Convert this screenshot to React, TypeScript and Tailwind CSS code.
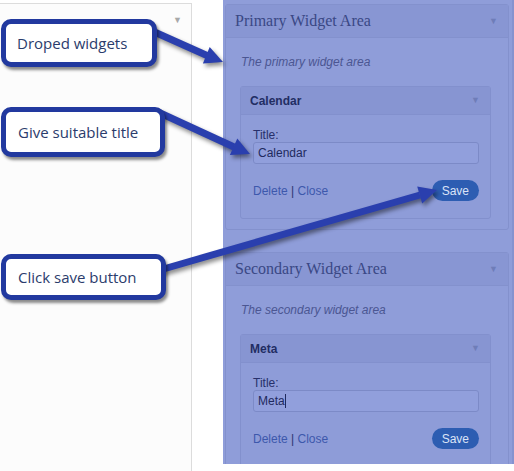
import React from 'react'

const Caret = () => <span className="text-[9px] leading-none text-[#6f7db8]">▼</span>

const Widget = ({ name, value, cursor }: { name: string; value: string; cursor?: boolean }) => (
  <div className="ml-[14px] w-[251px] border border-[#8290cd] rounded-[3px] bg-[#8e9cd8]">
    <div className="h-[28px] flex items-center justify-between pl-[9px] pr-[10px] bg-[#8795d2] border-b border-[#8290cd]">
      <span className="font-bold text-[12px] text-[#222d63]">{name}</span>
      <Caret />
    </div>
    <div className="pl-[12px] pr-[11px] pt-[13px] pb-[17px]">
      <div className="text-[12px] leading-[14px] text-[#27306a]">Title:</div>
      <div className="h-[22px] flex items-center border border-[#7c8ac7] rounded-[3px] bg-[#919fdc] px-[4px] text-[12px] text-[#1f2a5e]">
        {value}
        {cursor && <span className="inline-block w-px h-[14px] bg-[#1f2a5e]" />}
      </div>
      <div className="mt-[16px] flex items-center justify-between">
        <span className="text-[12px] text-[#3d58ac]">
          Delete <span className="text-[#2c3570]">|</span> Close
        </span>
        <span className="h-[21px] px-[10px] rounded-full bg-[#2d5db2] text-[12px] text-[#dbe3f7] flex items-center">
          Save
        </span>
      </div>
    </div>
  </div>
)

const Area = ({ title, desc, children }: { title: string; desc: string; children: React.ReactNode }) => (
  <div className="w-[284px] border border-[#8391cd] rounded-[3px] bg-[#8f9dd9]">
    <div className="h-[33px] flex items-center justify-between pl-[9px] pr-[10px] bg-[#8896d3] border-b border-[#8391cd]">
      <span className="font-['Liberation_Serif',Georgia,serif] text-[16px] text-[#3a4885]">{title}</span>
      <Caret />
    </div>
    <div className="pt-[17px] pb-[10px]">
      <p className="pl-[15px] italic text-[12px] leading-[14px] text-[#4b5692]">{desc}</p>
      <div className="mt-[17px]">{children}</div>
    </div>
  </div>
)

const Arrow = ({ x1, y1, bx, by, pts }: { x1: number; y1: number; bx: number; by: number; pts: string }) => (
  <g>
    <line x1={x1} y1={y1} x2={bx} y2={by} stroke="#2a3fae" strokeWidth="7" />
    <polygon points={pts} fill="#2a3fae" />
  </g>
)

export default function App() {
  return (
    <div className="relative w-[514px] h-[471px] bg-white overflow-hidden font-['Liberation_Sans',Arial,sans-serif]">
      <div className="flex">
        {/* left sidebar */}
        <div className="mt-[3px] w-[192px] h-[468px] border-t border-r border-[#dcdcdc] bg-[#fcfcfc] flex justify-end pt-[12px] pr-[9px]">
          <span className="text-[9px] leading-none text-[#a8a8a8]">▼</span>
        </div>

        {/* widget areas */}
        <div className="ml-[31px] w-[291px] h-[464px] overflow-hidden bg-[#8f9dd9] pt-[4px] pl-[2px] border-r-2 border-[#8593cf]">
          <Area title="Primary Widget Area" desc="The primary widget area">
            <Widget name="Calendar" value="Calendar" />
          </Area>
          <div className="mt-[22px]">
            <Area title="Secondary Widget Area" desc="The secondary widget area">
              <Widget name="Meta" value="Meta" cursor />
            </Area>
          </div>
        </div>
      </div>

      {/* arrows */}
      <svg className="absolute inset-0 drop-shadow-[2px_3px_2px_rgba(0,0,0,0.45)]" width="514" height="471">
        <Arrow x1={150} y1={30} bx={207} by={55.5} pts="223,62 202.9,63.5 209.7,46.9" />
        <Arrow x1={158} y1={112} bx={234} by={147} pts="250,154 229.9,154.9 237.3,138.5" />
        <Arrow x1={160} y1={270} bx={420} by={195} pts="437,190 422.2,203.6 417.2,186.4" />
      </svg>

      {/* callouts */}
      <div className="absolute left-[1px] top-[19px] w-[156px] h-[48px] rounded-[10px] border-[5px] border-[#22399f] bg-white shadow-[2px_3px_3px_rgba(0,0,0,0.45)] flex items-center pl-[11px] font-['Open_Sans',sans-serif] text-[15px] text-[#2b3c6c]">
        Droped widgets
      </div>
      <div className="absolute left-[1px] top-[107px] w-[164px] h-[50px] rounded-[10px] border-[5px] border-[#22399f] bg-white shadow-[2px_3px_3px_rgba(0,0,0,0.45)] flex items-center pl-[12px] font-['Open_Sans',sans-serif] text-[15px] text-[#2b3c6c]">
        Give suitable title
      </div>
      <div className="absolute left-[1px] top-[254px] w-[165px] h-[46px] rounded-[10px] border-[5px] border-[#22399f] bg-white shadow-[2px_3px_3px_rgba(0,0,0,0.45)] flex items-center pl-[12px] font-['Open_Sans',sans-serif] text-[15px] text-[#2b3c6c]">
        Click save button
      </div>
    </div>
  )
}
